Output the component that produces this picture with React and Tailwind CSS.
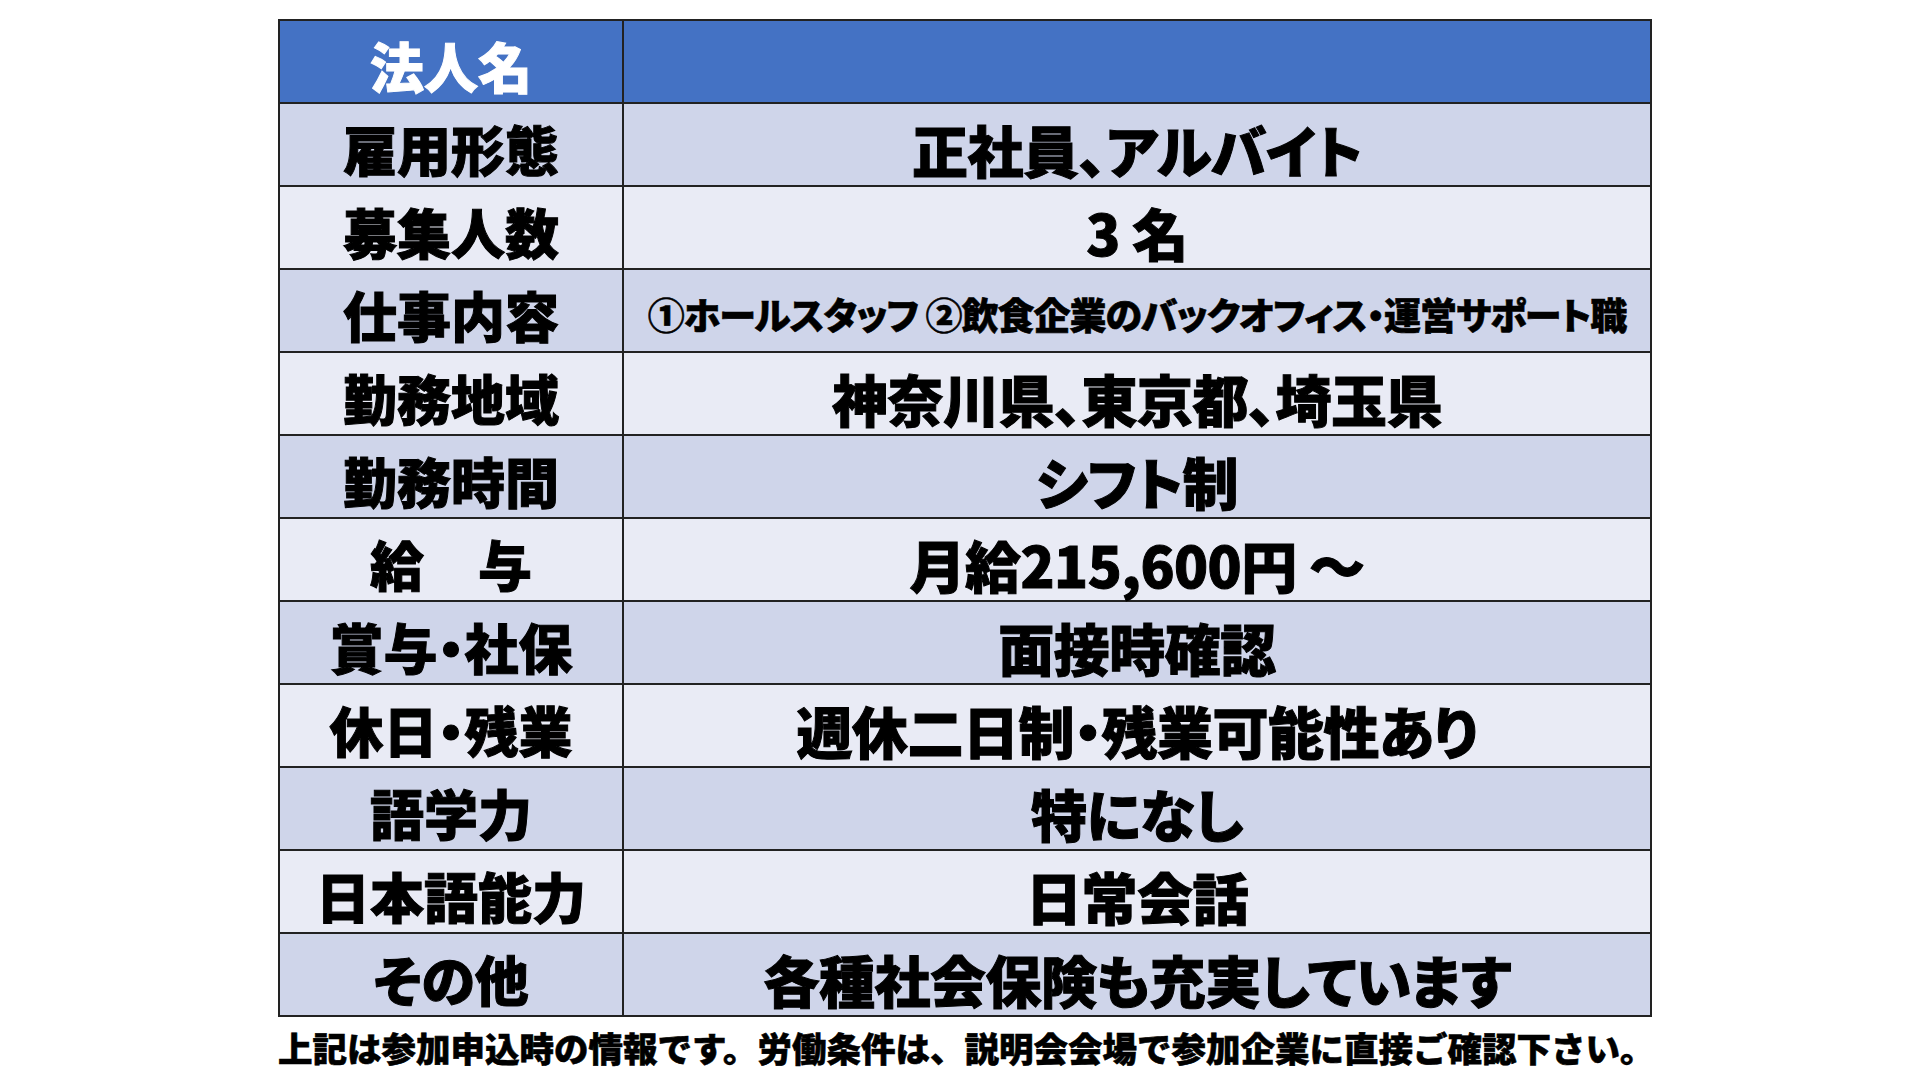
import React from "react";

const rows = [
  ["雇用形態", "正社員、アルバイト"],
  ["募集人数", "3 名"],
  ["仕事内容", "①ホールスタッフ ②飲食企業のバックオフィス・運営サポート職", true],
  ["勤務地域", "神奈川県、東京都、埼玉県"],
  ["勤務時間", "シフト制"],
  ["給　与", "月給215,600円 ～"],
  ["賞与・社保", "面接時確認"],
  ["休日・残業", "週休二日制・残業可能性あり"],
  ["語学力", "特になし"],
  ["日本語能力", "日常会話"],
  ["その他", "各種社会保険も充実しています"],
];

export default function App() {
  return (
    <div
      className="w-[1920px] h-[1080px] bg-white overflow-hidden text-black"
      style={{ fontFamily: '"Noto Sans CJK JP", "Noto Sans", sans-serif' }}
    >
      <div className="ml-[278px] pt-[19px] w-[1374px]">
        <div className="border-2 border-[#222222] flex flex-col">
          <div className="flex h-[83px] bg-[#4472C4] border-b-2 border-[#222222]">
            <div className="w-[344px] border-r-2 border-[#222222] flex items-center justify-center text-white font-black text-[54px] leading-none pt-2 [-webkit-text-stroke:1px_white]">
              法人名
            </div>
            <div className="flex-1" />
          </div>
          {rows.map(([label, value, small], i) => (
            <div
              key={label}
              className={
                "flex " +
                (i % 2 === 0 ? "bg-[#CFD5EA] " : "bg-[#E9EBF5] ") +
                (i < rows.length - 1 ? "h-[83px] border-b-2 border-[#222222]" : "h-[81px]")
              }
            >
              <div className="w-[344px] border-r-2 border-[#222222] flex items-center justify-center font-black text-[54px] leading-none pt-2 whitespace-pre [font-feature-settings:'palt'] [-webkit-text-stroke:1px_black]">
                {label}
              </div>
              <div
                className={
                  "flex-1 flex items-center justify-center font-black leading-none pt-2 whitespace-pre [font-feature-settings:'palt'] " +
                  (small
                    ? "text-[37px] tracking-[-1px] [-webkit-text-stroke:0.6px_black]"
                    : "text-[56px] tracking-[-0.5px] [-webkit-text-stroke:1px_black]")
                }
              >
                {value}
              </div>
            </div>
          ))}
        </div>
        <div className="mt-[13px] font-black text-[34.5px] leading-none whitespace-nowrap [-webkit-text-stroke:0.6px_black]">
          上記は参加申込時の情報です。労働条件は、説明会会場で参加企業に直接ご確認下さい。
        </div>
      </div>
    </div>
  );
}
